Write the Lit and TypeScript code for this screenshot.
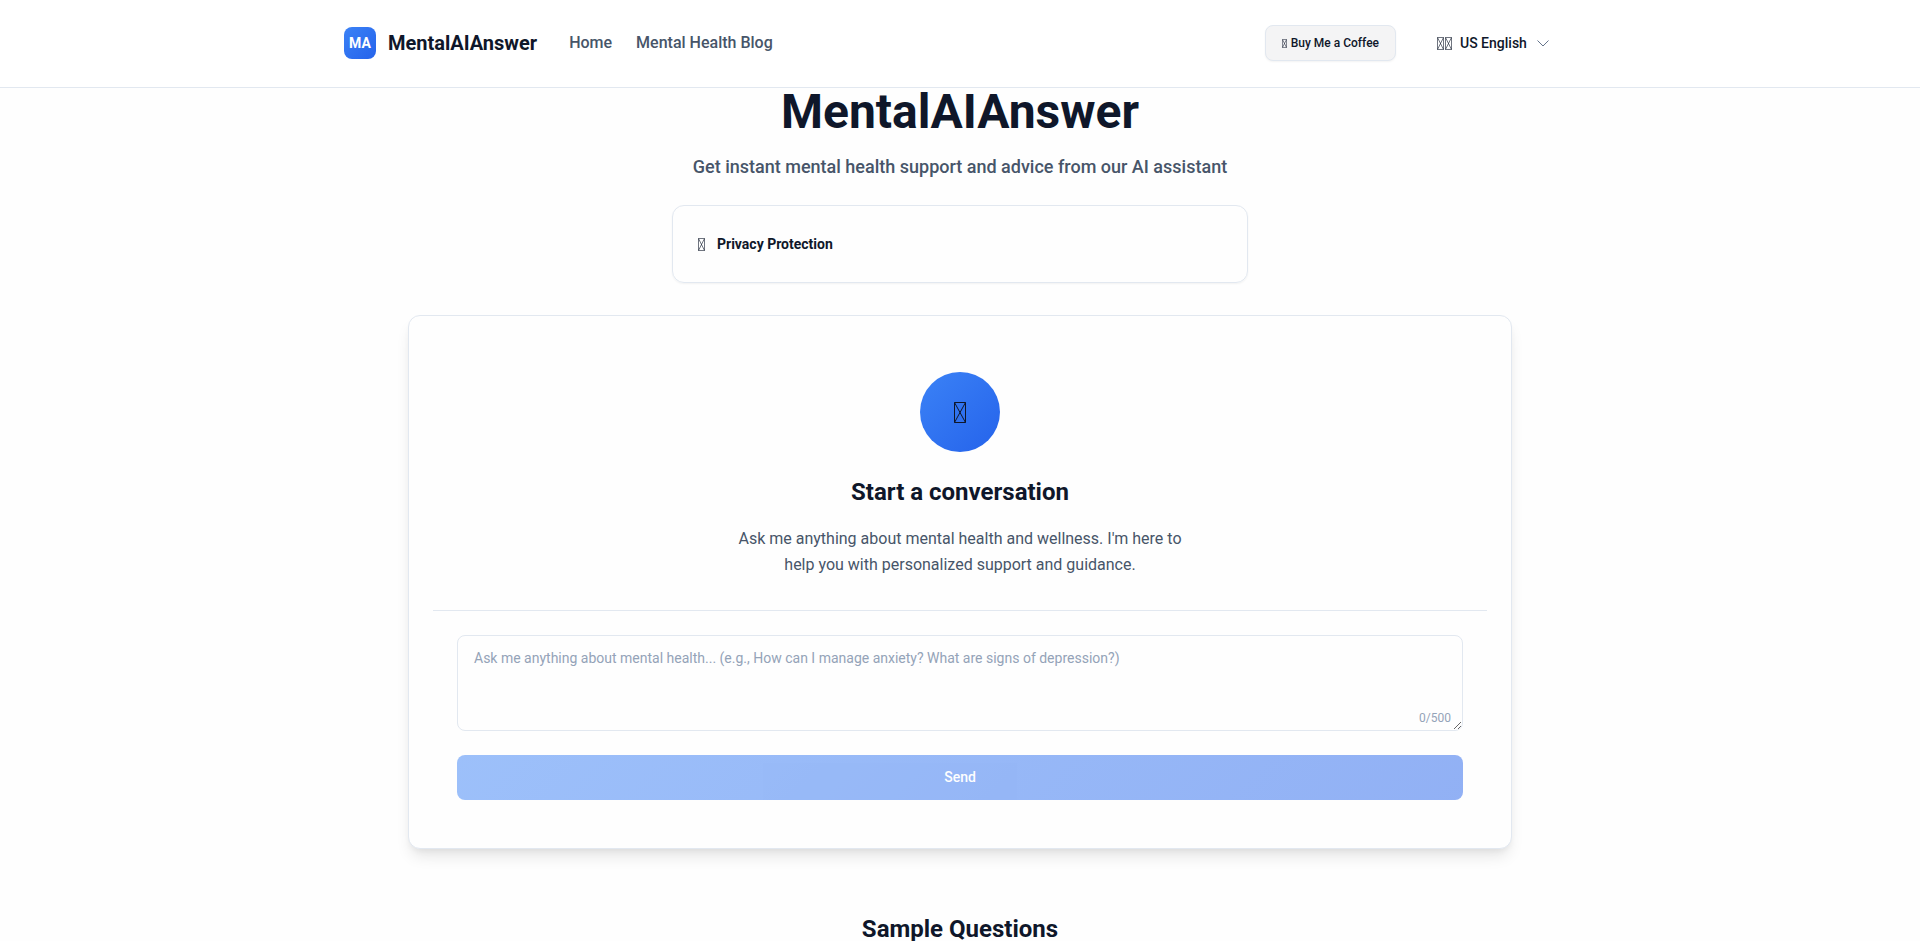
import { LitElement, html, css } from "lit";
import { customElement, state } from "lit/decorators.js";

const MAX_LENGTH = 500;

/* Narrow crossed box, drawn in place of a pictograph. */
const crossedBox = (width: number, height: number, stroke: number) => html`
  <svg
    width=${width}
    height=${height}
    viewBox="0 0 ${width} ${height}"
    fill="none"
    stroke="currentColor"
    stroke-width=${stroke}
    aria-hidden="true"
  >
    <path d="M.5 .5H${width - 0.5}V${height - 0.5}H.5ZL${width - 0.5} ${height - 0.5}M${width - 0.5} .5L.5 ${height - 0.5}" />
  </svg>
`;

@customElement("site-header")
class SiteHeader extends LitElement {
  static styles = css`
    :host {
      display: block;
      background: #ffffff;
      border-bottom: 1px solid #e2e8f0;
    }
    .bar {
      display: flex;
      align-items: center;
      justify-content: space-between;
      box-sizing: border-box;
      max-width: 1280px;
      min-height: 87px;
      margin: 0 auto;
      padding: 0 24px 1px;
    }
    .left {
      display: flex;
      align-items: center;
      gap: 32px;
    }
    .brand {
      display: flex;
      align-items: center;
      gap: 12px;
      color: #0f172a;
      font-size: 20px;
      line-height: 28px;
      font-weight: 700;
      text-decoration: none;
    }
    .mark {
      display: grid;
      place-items: center;
      width: 32px;
      height: 32px;
      border-radius: 8px;
      background: linear-gradient(135deg, #3b82f6, #2563eb);
      color: #ffffff;
      font-size: 14px;
    }
    nav {
      display: flex;
      gap: 24px;
    }
    nav a {
      color: #475569;
      font-size: 16px;
      line-height: 24px;
      font-weight: 500;
      text-decoration: none;
    }
    .right {
      display: flex;
      align-items: center;
      gap: 16px;
    }
    .coffee {
      display: flex;
      align-items: center;
      gap: 4px;
      padding: 8px 16px;
      border: 1px solid #e2e8f0;
      border-radius: 8px;
      background: #f4f4f5;
      box-shadow: 0 1px 2px rgba(0, 0, 0, 0.05);
      color: #0f172a;
      font: inherit;
      font-size: 12px;
      line-height: 18px;
      font-weight: 500;
    }
    .language {
      display: flex;
      align-items: center;
      gap: 8px;
      padding: 0 24px;
      border: 1px solid transparent;
      color: #0f172a;
      font-size: 14px;
      line-height: 20px;
      font-weight: 500;
    }
    .flag {
      display: flex;
      gap: 1px;
    }
    select {
      appearance: none;
      padding: 0;
      border: 0;
      background: none;
      color: inherit;
      font: inherit;
    }
    .chevron {
      width: 16px;
      height: 16px;
      color: #64748b;
    }
  `;

  render() {
    return html`
      <div class="bar">
        <div class="left">
          <a class="brand" href="#"><span class="mark">MA</span>MentalAIAnswer</a>
          <nav>
            <a href="#">Home</a>
            <a href="#blog">Mental Health Blog</a>
          </nav>
        </div>
        <div class="right">
          <button class="coffee" type="button">${crossedBox(5, 9, 0.5)}<span>Buy Me a Coffee</span></button>
          <label class="language">
            <span class="flag">${crossedBox(7, 13, 0.6)}${crossedBox(7, 13, 0.6)}</span>
            <select aria-label="Language">
              <option>US English</option>
            </select>
            <svg class="chevron" viewBox="0 0 16 16" fill="none" stroke="currentColor" aria-hidden="true">
              <path d="M2.5 5.5 8 11l5.5-5.5" />
            </svg>
          </label>
        </div>
      </div>
    `;
  }
}

@customElement("chat-panel")
class ChatPanel extends LitElement {
  static styles = css`
    :host {
      display: block;
      padding: 24px;
      border: 1px solid #e2e8f0;
      border-radius: 12px;
      background: #fefefe;
      box-shadow:
        0 10px 15px -3px rgba(0, 0, 0, 0.1),
        0 4px 6px -2px rgba(0, 0, 0, 0.05);
    }
    .intro {
      display: flex;
      flex-direction: column;
      align-items: center;
      padding: 32px 24px;
      border-bottom: 1px solid #e2e8f0;
      text-align: center;
    }
    .avatar {
      display: grid;
      place-items: center;
      width: 80px;
      height: 80px;
      margin-bottom: 24px;
      border-radius: 50%;
      background: linear-gradient(135deg, #3b82f6, #2563eb);
    }
    h2 {
      margin: 0 0 18px;
      font-size: 24px;
      line-height: 32px;
      font-weight: 700;
    }
    p {
      max-width: 448px;
      margin: 0;
      color: #475569;
      font-size: 16px;
      line-height: 26px;
    }
    form {
      display: flex;
      flex-direction: column;
      gap: 24px;
      padding: 24px;
    }
    .field {
      display: grid;
      position: relative;
    }
    textarea {
      box-sizing: border-box;
      width: 100%;
      height: 96px;
      padding: 12px 16px;
      border: 1px solid #e2e8f0;
      border-radius: 8px;
      background: #fefefe;
      color: #0f172a;
      font: inherit;
      font-size: 14px;
      line-height: 20px;
      resize: vertical;
    }
    textarea::placeholder {
      color: #94a3b8;
    }
    .count {
      position: absolute;
      right: 12px;
      bottom: 4px;
      color: #94a3b8;
      font-size: 12px;
      line-height: 18px;
      pointer-events: none;
    }
    .send {
      padding: 12px 24px;
      border: 0;
      border-radius: 8px;
      background: linear-gradient(135deg, #3b82f6, #2563eb);
      color: #ffffff;
      font: inherit;
      font-size: 14px;
      line-height: 21px;
      font-weight: 500;
    }
    .send:disabled {
      opacity: 0.5;
    }
  `;

  @state() private text = "";

  private onInput(event: Event) {
    this.text = (event.target as HTMLTextAreaElement).value;
  }

  render() {
    return html`
      <div class="intro">
        <div class="avatar">${crossedBox(12, 21, 1)}</div>
        <h2>Start a conversation</h2>
        <p>Ask me anything about mental health and wellness. I'm here to help you with personalized support and guidance.</p>
      </div>
      <form @submit=${(e: Event) => e.preventDefault()}>
        <div class="field">
          <textarea
            aria-label="Your question"
            maxlength=${MAX_LENGTH}
            placeholder="Ask me anything about mental health... (e.g., How can I manage anxiety? What are signs of depression?)"
            .value=${this.text}
            @input=${this.onInput}
          ></textarea>
          <span class="count">${this.text.length}/${MAX_LENGTH}</span>
        </div>
        <button class="send" type="submit" ?disabled=${!this.text.trim()}>Send</button>
      </form>
    `;
  }
}

@customElement("app-root")
class AppRoot extends LitElement {
  static styles = css`
    :host {
      display: block;
      height: 100vh;
      overflow: hidden;
      background: #fefefe;
      color: #0f172a;
      font-family: Roboto, "Liberation Sans", sans-serif;
      font-size: 16px;
      line-height: 24px;
    }
    main {
      display: flex;
      flex-direction: column;
      box-sizing: border-box;
      max-width: 1152px;
      margin: 0 auto;
      padding: 0 24px;
    }
    h1 {
      margin: 0 0 16px;
      font-size: 48px;
      line-height: 48px;
      font-weight: 700;
      text-align: center;
    }
    .tagline {
      margin: 0 0 24px;
      color: #475569;
      font-size: 18px;
      line-height: 29px;
      font-weight: 500;
      text-align: center;
    }
    .privacy {
      display: flex;
      align-items: center;
      gap: 12px;
      box-sizing: border-box;
      width: 100%;
      max-width: 576px;
      margin: 0 auto 32px;
      padding: 28px 24px;
      border: 1px solid #e2e8f0;
      border-radius: 12px;
      box-shadow: 0 1px 2px rgba(0, 0, 0, 0.05);
      font-size: 14px;
      line-height: 20px;
    }
    .privacy h3 {
      margin: 0;
      font-size: 14px;
      font-weight: 700;
    }
    .lock {
      display: grid;
      place-items: center;
      width: 8px;
    }
    .samples {
      margin: 64px 0 24px;
      font-size: 24px;
      line-height: 32px;
      font-weight: 700;
      text-align: center;
    }
  `;

  render() {
    return html`
      <site-header></site-header>
      <main>
        <h1>MentalAIAnswer</h1>
        <p class="tagline">Get instant mental health support and advice from our AI assistant</p>
        <section class="privacy">
          <span class="lock">${crossedBox(7, 13, 0.6)}</span>
          <h3>Privacy Protection</h3>
        </section>
        <chat-panel></chat-panel>
        <h2 class="samples">Sample Questions</h2>
      </main>
    `;
  }
}
